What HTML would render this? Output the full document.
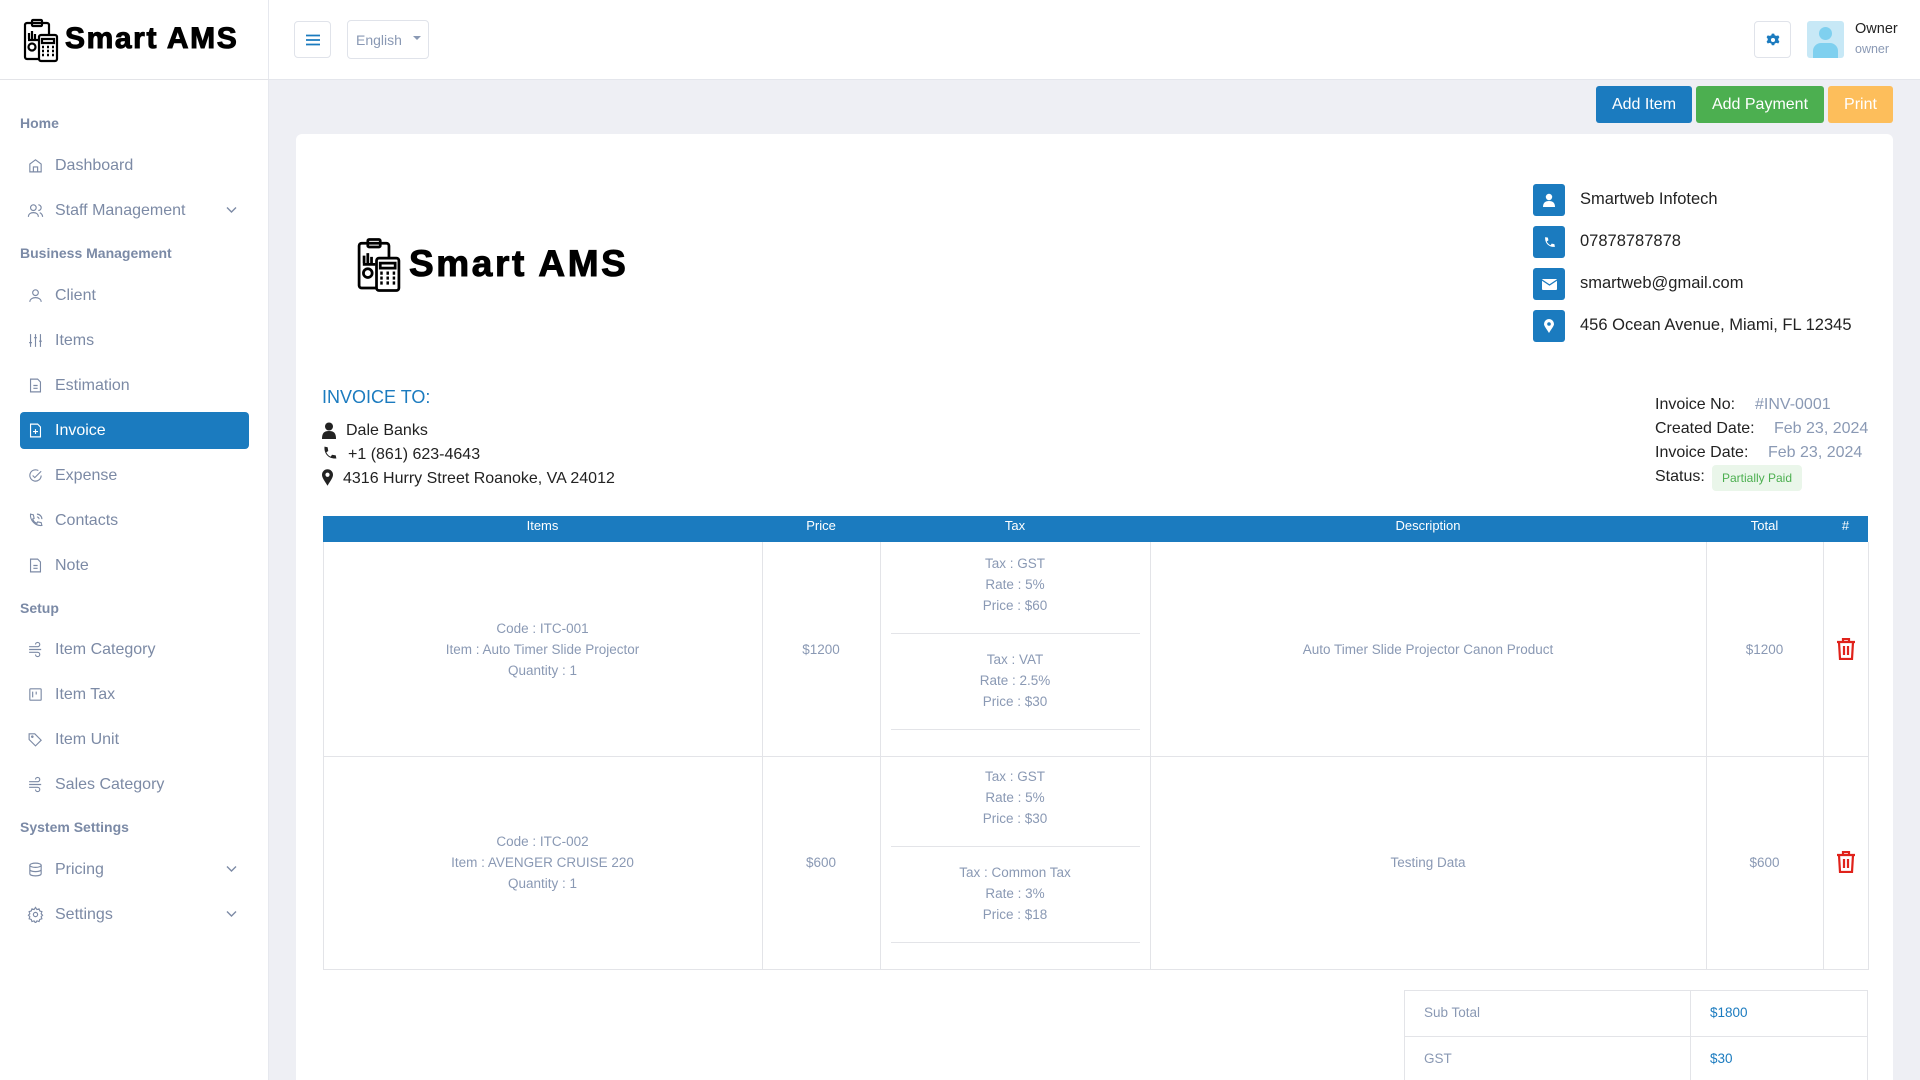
<!DOCTYPE html>
<html style="overflow:hidden"><head><meta charset="utf-8"><style>
*{box-sizing:border-box;margin:0;padding:0}
html,body{width:1920px;height:1080px;overflow:hidden}
body{background:#eeeff4;font-family:"Liberation Sans",sans-serif;position:relative}
.abs{position:absolute}
#side{left:0;top:0;width:269px;height:1080px;background:#fff;border-right:1px solid #e6e8ee}
#top{left:269px;top:0;width:1651px;height:80px;background:#fff;border-bottom:1px solid #e4e6ec}
.logo-t{font-weight:bold;color:#000;-webkit-text-stroke:1px #000;white-space:nowrap}
.sec{left:20px;font-size:14px;font-weight:bold;color:#7b8aa6}
.it{left:20px;width:229px;height:37px;font-size:16px;color:#7c8aa5;display:flex;align-items:center;padding-left:7px}
.it svg{width:17px;height:17px;margin-right:11px;stroke:#7c8aa5;fill:none;stroke-width:1.6;flex:none}
.it.act{background:#1b7bbf;color:#fff;border-radius:4px}
.it.act svg{stroke:#fff}
.it svg.chev{position:absolute;left:206px;top:14px;width:11px;height:8px;margin:0;stroke-width:1.4}
.btn{height:37px;color:#fff;font-size:16px;display:flex;align-items:center;justify-content:center;border-radius:3px}
#card{left:296px;top:134px;width:1597px;height:946px;background:#fff;border-radius:6px 6px 0 0}
.cb{width:32px;height:32px;background:#1b7bbf;border-radius:3px;display:flex;align-items:center;justify-content:center}
.ct{font-size:16.5px;color:#222}
.cell{position:absolute;display:flex;flex-direction:column;align-items:center;justify-content:center;color:#8a99b4;font-size:13.5px;line-height:21px;text-align:center}
.vl{position:absolute;width:1px;background:#e3e4e8}
.hl{position:absolute;height:1px;background:#e3e4e8}
.th{position:absolute;top:516px;height:26px;color:#fff;font-size:13px;text-align:center;line-height:20px}
</style></head><body>
<div id="side" class="abs">
 <svg class="abs" style="left:23px;top:18px" width="36" height="45" viewBox="0 0 36 45" fill="none" stroke="#000" stroke-width="2.2"><rect x="2" y="5" width="24" height="36" rx="2"/><rect x="9" y="2" width="10" height="6" rx="1"/><path d="M6 15v6M9 13v8M12 16v5M5 22h10"/><circle cx="9" cy="29" r="3.5"/><rect x="16" y="17" width="18" height="26" rx="2" fill="#fff"/><path d="M19 21h12v4H19z"/><path d="M19 29h2M24 29h2M29 29h2M19 33h2M24 33h2M29 33h2M19 37h2M24 37h2M29 37h2" stroke-width="2.6"/></svg>
 <div class="abs logo-t" style="left:65px;top:22px;font-size:30px;letter-spacing:1.6px">Smart AMS</div>
 <div class="hl" style="left:0;top:79px;width:269px"></div>
 <div class="abs sec" style="top:115px">Home</div>
 <div class="abs it" style="top:147px"><svg viewBox="0 0 24 24"><path d="M4 21V10l8-6 8 6v11H4z M9 21v-7h6v7"/></svg>Dashboard</div>
 <div class="abs it" style="top:192px"><svg viewBox="0 0 24 24"><circle cx="9" cy="8" r="4"/><path d="M2 21c0-4 3-6 7-6s7 2 7 6M16 4a4 4 0 010 8M18 15c2 1 4 3 4 6"/></svg>Staff Management<svg class="chev" viewBox="0 0 11 8"><path d="M1 1.5l4.5 4.5 4.5-4.5"/></svg></div>
 <div class="abs sec" style="top:245px">Business Management</div>
 <div class="abs it" style="top:277px"><svg viewBox="0 0 24 24"><circle cx="12" cy="8" r="4"/><path d="M4 21c0-4 4-6 8-6s8 2 8 6"/></svg>Client</div>
 <div class="abs it" style="top:322px"><svg viewBox="0 0 24 24"><path d="M5 3v18M12 3v18M19 3v18M3 15h4M10 8h4M17 13h4"/></svg>Items</div>
 <div class="abs it" style="top:367px"><svg viewBox="0 0 24 24"><path d="M5 3h10l4 4v14H5z M9 12h6M9 16h6"/></svg>Estimation</div>
 <div class="abs it act" style="top:412px"><svg viewBox="0 0 24 24"><path d="M5 3h10l4 4v14H5z M12 10v7M8.5 13.5h7"/></svg>Invoice</div>
 <div class="abs it" style="top:457px"><svg viewBox="0 0 24 24"><path d="M20 12a8 8 0 11-4-7M8 12l3 3 9-9"/></svg>Expense</div>
 <div class="abs it" style="top:502px"><svg viewBox="0 0 24 24"><path d="M5 3l4 1 1 5-2 1c1 3 3 5 6 6l1-2 5 1 1 4c-9 1-17-7-16-16zM14 3a7 7 0 017 7M14 7a3 3 0 013 3"/></svg>Contacts</div>
 <div class="abs it" style="top:547px"><svg viewBox="0 0 24 24"><path d="M5 3h10l4 4v14H5z M9 12h6M9 16h6"/></svg>Note</div>
 <div class="abs sec" style="top:600px">Setup</div>
 <div class="abs it" style="top:631px"><svg viewBox="0 0 24 24"><path d="M3 8h12a3 3 0 10-3-3M3 12h17M3 16h12a3 3 0 11-3 3"/></svg>Item Category</div>
 <div class="abs it" style="top:676px"><svg viewBox="0 0 24 24"><rect x="4" y="4" width="16" height="16" rx="1"/><path d="M8 8v8M13 8v4"/></svg>Item Tax</div>
 <div class="abs it" style="top:721px"><svg viewBox="0 0 24 24"><path d="M3 4v8l9 9 8-8-9-9z"/><circle cx="7.5" cy="8" r="1"/></svg>Item Unit</div>
 <div class="abs it" style="top:766px"><svg viewBox="0 0 24 24"><path d="M3 8h12a3 3 0 10-3-3M3 12h17M3 16h12a3 3 0 11-3 3"/></svg>Sales Category</div>
 <div class="abs sec" style="top:819px">System Settings</div>
 <div class="abs it" style="top:851px"><svg viewBox="0 0 24 24"><ellipse cx="12" cy="6" rx="8" ry="3"/><path d="M4 6v12c0 2 4 3 8 3s8-1 8-3V6M4 12c0 2 4 3 8 3s8-1 8-3"/></svg>Pricing<svg class="chev" viewBox="0 0 11 8"><path d="M1 1.5l4.5 4.5 4.5-4.5"/></svg></div>
 <div class="abs it" style="top:896px"><svg viewBox="0 0 24 24"><circle cx="12" cy="12" r="3"/><path d="M12 2l2 3 3-1 1 3 3 1-1 3 2 2-2 2 1 3-3 1-1 3-3-1-2 3-2-3-3 1-1-3-3-1 1-3-2-2 2-2-1-3 3-1 1-3 3 1z"/></svg>Settings<svg class="chev" viewBox="0 0 11 8"><path d="M1 1.5l4.5 4.5 4.5-4.5"/></svg></div>
</div>
<div id="top" class="abs">
 <div class="abs" style="left:25px;top:21px;width:37px;height:37px;border:1px solid #e0e3ea;border-radius:4px"><svg class="abs" style="left:11px;top:12px" width="14" height="12"><path d="M0 1.5h14M0 6h14M0 10.5h14" stroke="#1b7bbf" stroke-width="1.8"/></svg></div>
 <div class="abs" style="left:78px;top:20px;width:82px;height:39px;border:1px solid #e0e3ea;border-radius:4px;font-size:14px;color:#8a99b4;padding:11px 0 0 8px">English<span class="abs" style="left:65px;top:15px;border:4px solid transparent;border-top:4px solid #8a99b4;border-bottom:0"></span></div>
 <div class="abs" style="left:1485px;top:21px;width:37px;height:37px;border:1px solid #e0e3ea;border-radius:4px"><svg class="abs" style="left:11px;top:11px" width="14" height="14" viewBox="0 0 24 24"><path fill="#1b7bbf" d="M10 1h4l1 3 3 1 3-1 2 3-2 3 0 2 2 3-2 3-3-1-3 1-1 3h-4l-1-3-3-1-3 1-2-3 2-3v-2L1 7l2-3 3 1 3-1z"/><circle cx="12" cy="12" r="3.5" fill="#fff"/></svg></div>
 <div class="abs" style="left:1538px;top:21px;width:37px;height:37px;background:#c7e8f6;border-radius:3px;overflow:hidden"><div class="abs" style="left:12px;top:6px;width:13px;height:13px;border-radius:50%;background:#7fd0ef"></div><div class="abs" style="left:6px;top:22px;width:25px;height:18px;border-radius:8px 8px 0 0;background:#7fd0ef"></div></div>
 <div class="abs" style="left:1586px;top:21px;font-size:14.5px;color:#222">Owner</div>
 <div class="abs" style="left:1586px;top:42px;font-size:12.5px;color:#8a99b4">owner</div>
</div>
<div class="abs btn" style="left:1596px;top:86px;width:96px;background:#1b7bbf">Add Item</div>
<div class="abs btn" style="left:1696px;top:86px;width:128px;background:#4caf50">Add Payment</div>
<div class="abs btn" style="left:1828px;top:86px;width:65px;background:#fdbe5b">Print</div>
<div id="card" class="abs"></div>
<svg class="abs" style="left:356px;top:237px" width="46" height="56" viewBox="0 0 36 45" fill="none" stroke="#000" stroke-width="2.2"><rect x="2" y="5" width="24" height="36" rx="2"/><rect x="9" y="2" width="10" height="6" rx="1"/><path d="M6 15v6M9 13v8M12 16v5M5 22h10"/><circle cx="9" cy="29" r="3.5"/><rect x="16" y="17" width="18" height="26" rx="2" fill="#fff"/><path d="M19 21h12v4H19z"/><path d="M19 29h2M24 29h2M29 29h2M19 33h2M24 33h2M29 33h2M19 37h2M24 37h2M29 37h2" stroke-width="2.6"/></svg>
<div class="abs logo-t" style="left:409px;top:243px;font-size:37px;letter-spacing:2.6px">Smart AMS</div>
<div class="abs cb" style="left:1533px;top:184px"><svg width="12" height="14" viewBox="0 0 12 14" fill="#fff"><circle cx="6" cy="4" r="3.2"/><path d="M0 14c0-4 2-6 6-6s6 2 6 6z"/></svg></div>
<div class="abs ct" style="left:1580px;top:190px">Smartweb Infotech</div>
<div class="abs cb" style="left:1533px;top:226px"><svg width="13" height="13" viewBox="0 0 24 24" fill="#fff"><path d="M4 2l5 1 1 5-3 2c1 3 4 6 7 7l2-3 5 1 1 5c-12 1-19-8-18-18z"/></svg></div>
<div class="abs ct" style="left:1580px;top:232px">07878787878</div>
<div class="abs cb" style="left:1533px;top:268px"><svg width="15" height="11" viewBox="0 0 15 11"><rect width="15" height="11" rx="1" fill="#fff"/><path d="M0 1l7.5 5L15 1" stroke="#1b7bbf" stroke-width="1.3" fill="none"/></svg></div>
<div class="abs ct" style="left:1580px;top:274px">smartweb@gmail.com</div>
<div class="abs cb" style="left:1533px;top:310px"><svg width="10" height="14" viewBox="0 0 10 14"><path d="M5 14C2 9 0 7 0 5a5 5 0 0110 0c0 2-2 4-5 9z" fill="#fff"/><circle cx="5" cy="5" r="1.8" fill="#1b7bbf"/></svg></div>
<div class="abs ct" style="left:1580px;top:316px">456 Ocean Avenue, Miami, FL 12345</div>
<div class="abs" style="left:322px;top:387px;font-size:18px;color:#1b7bbf">INVOICE TO:</div>
<svg class="abs" style="left:322px;top:422px" width="14" height="17" viewBox="0 0 14 17" fill="#222"><circle cx="7" cy="4.5" r="4"/><path d="M0 17c0-6 2-8 7-8s7 2 7 8z"/></svg>
<div class="abs ct" style="left:346px;top:422px;font-size:16px">Dale Banks</div>
<svg class="abs" style="left:322px;top:446px" width="15" height="15" viewBox="0 0 24 24" fill="#222"><path d="M4 1l5 1 1 6-3 2c1 3 4 6 7 7l2-3 6 1 1 5c-13 1-20-8-19-19z"/></svg>
<div class="abs ct" style="left:348px;top:446px;font-size:16px">+1 (861) 623-4643</div>
<svg class="abs" style="left:322px;top:469px" width="11" height="17" viewBox="0 0 10 15"><path d="M5 15C2 10 0 7.5 0 5a5 5 0 0110 0c0 2.5-2 5-5 10z" fill="#222"/><circle cx="5" cy="5" r="1.9" fill="#fff"/></svg>
<div class="abs ct" style="left:343px;top:470px;font-size:16px">4316 Hurry Street Roanoke, VA 24012</div>
<div class="abs ct" style="left:1655px;top:396px;font-size:16px">Invoice No:</div><div class="abs" style="left:1755px;top:396px;font-size:16px;color:#8a99b4">#INV-0001</div>
<div class="abs ct" style="left:1655px;top:420px;font-size:16px">Created Date:</div><div class="abs" style="left:1774px;top:420px;font-size:16px;color:#8a99b4">Feb 23, 2024</div>
<div class="abs ct" style="left:1655px;top:444px;font-size:16px">Invoice Date:</div><div class="abs" style="left:1768px;top:444px;font-size:16px;color:#8a99b4">Feb 23, 2024</div>
<div class="abs ct" style="left:1655px;top:468px;font-size:16px">Status:</div>
<div class="abs" style="left:1712px;top:465px;width:90px;height:26px;background:#eaf6ea;border-radius:4px;color:#4caf50;font-size:12px;line-height:26px;text-align:center">Partially Paid</div>
<div class="abs" style="left:323px;top:516px;width:1545px;height:26px;background:#1b7bbf"></div>
<div class="th" style="left:323px;width:439px">Items</div>
<div class="th" style="left:762px;width:118px">Price</div>
<div class="th" style="left:880px;width:270px">Tax</div>
<div class="th" style="left:1150px;width:556px">Description</div>
<div class="th" style="left:1706px;width:117px">Total</div>
<div class="th" style="left:1823px;width:45px">#</div>
<div class="vl" style="left:323px;top:542px;height:428px"></div>
<div class="vl" style="left:762px;top:542px;height:428px"></div>
<div class="vl" style="left:880px;top:542px;height:428px"></div>
<div class="vl" style="left:1150px;top:542px;height:428px"></div>
<div class="vl" style="left:1706px;top:542px;height:428px"></div>
<div class="vl" style="left:1823px;top:542px;height:428px"></div>
<div class="vl" style="left:1868px;top:542px;height:428px"></div>
<div class="hl" style="left:323px;top:756px;width:1545px"></div>
<div class="hl" style="left:323px;top:969px;width:1545px"></div>
<div class="hl" style="left:891px;top:633px;width:249px"></div>
<div class="hl" style="left:891px;top:729px;width:249px"></div>
<div class="hl" style="left:891px;top:846px;width:249px"></div>
<div class="hl" style="left:891px;top:942px;width:249px"></div>
<div class="cell" style="left:323px;top:543px;width:439px;height:213px">Code : ITC-001<br>Item : Auto Timer Slide Projector<br>Quantity : 1</div>
<div class="cell" style="left:762px;top:543px;width:118px;height:213px">$1200</div>
<div class="cell" style="left:880px;top:553px;width:270px;height:63px">Tax : GST<br>Rate : 5%<br>Price : $60</div>
<div class="cell" style="left:880px;top:649px;width:270px;height:63px">Tax : VAT<br>Rate : 2.5%<br>Price : $30</div>
<div class="cell" style="left:1150px;top:543px;width:556px;height:213px">Auto Timer Slide Projector Canon Product</div>
<div class="cell" style="left:1706px;top:543px;width:117px;height:213px">$1200</div>
<div class="cell" style="left:323px;top:756px;width:439px;height:213px">Code : ITC-002<br>Item : AVENGER CRUISE 220<br>Quantity : 1</div>
<div class="cell" style="left:762px;top:756px;width:118px;height:213px">$600</div>
<div class="cell" style="left:880px;top:766px;width:270px;height:63px">Tax : GST<br>Rate : 5%<br>Price : $30</div>
<div class="cell" style="left:880px;top:862px;width:270px;height:63px">Tax : Common Tax<br>Rate : 3%<br>Price : $18</div>
<div class="cell" style="left:1150px;top:756px;width:556px;height:213px">Testing Data</div>
<div class="cell" style="left:1706px;top:756px;width:117px;height:213px">$600</div>
<svg class="abs" style="left:1836px;top:638px" width="20" height="22" viewBox="0 0 20 22" fill="none" stroke="#e0221b" stroke-width="2.2"><path d="M1 4h18M7 4V1h6v3M3 4l1 17h12l1-17M8 8v9M12 8v9"/></svg>
<svg class="abs" style="left:1836px;top:851px" width="20" height="22" viewBox="0 0 20 22" fill="none" stroke="#e0221b" stroke-width="2.2"><path d="M1 4h18M7 4V1h6v3M3 4l1 17h12l1-17M8 8v9M12 8v9"/></svg>
<div class="abs" style="left:1404px;top:990px;width:464px;height:100px;border:1px solid #e3e4e8"></div>
<div class="vl" style="left:1690px;top:990px;height:100px"></div>
<div class="hl" style="left:1404px;top:1036px;width:464px"></div>
<div class="abs" style="left:1424px;top:1005px;font-size:13.5px;color:#8a99b4">Sub Total</div>
<div class="abs" style="left:1710px;top:1005px;font-size:13.5px;color:#1b7bbf">$1800</div>
<div class="abs" style="left:1424px;top:1051px;font-size:13.5px;color:#8a99b4">GST</div>
<div class="abs" style="left:1710px;top:1051px;font-size:13.5px;color:#1b7bbf">$30</div>
</body></html>
